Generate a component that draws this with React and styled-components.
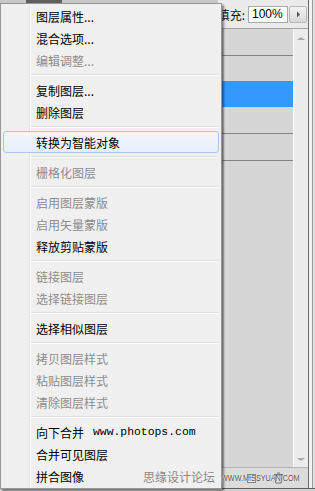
import React from "react";
import styled, { createGlobalStyle } from "styled-components";

const GlobalStyle = createGlobalStyle`
  html, body {
    margin: 0;
    padding: 0;
    background: #d2d2d2;
  }
  body {
    font-family: "Noto Sans CJK SC", "Liberation Sans", sans-serif;
  }
`;

const MENU_ITEMS = [
  { label: "图层属性..." },
  { label: "混合选项..." },
  { label: "编辑调整...", disabled: true },
  "sep",
  { label: "复制图层..." },
  { label: "删除图层" },
  "sep",
  { label: "转换为智能对象", hover: true },
  "sep",
  { label: "栅格化图层", disabled: true },
  "sep",
  { label: "启用图层蒙版", disabled: true },
  { label: "启用矢量蒙版", disabled: true },
  { label: "释放剪贴蒙版" },
  "sep",
  { label: "链接图层", disabled: true },
  { label: "选择链接图层", disabled: true },
  "sep",
  { label: "选择相似图层" },
  "sep",
  { label: "拷贝图层样式", disabled: true },
  { label: "粘贴图层样式", disabled: true },
  { label: "清除图层样式", disabled: true },
  "sep",
  { label: "向下合并", extra: "www.photops.com" },
  { label: "合并可见图层" },
  { label: "拼合图像" },
];

const LAYER_ROWS = [
  { h: 26, line: true },
  { h: 25 },
  { h: 26, selected: true },
  { h: 26, line: true },
  { h: 26, line: true },
];

const App = () => {
  return (
    <>
      <GlobalStyle />
      <Screen>
        <Panel>
          <Main>
            <FillRow>
              <HeaderTrack>
                <HeaderTab />
              </HeaderTrack>
              <FillLabel>填充:</FillLabel>
              <FillInput>100%</FillInput>
              <ArrowBtn>
                <svg width="5" height="7" viewBox="0 0 5 7">
                  <path d="M1 0.5 L4 3.5 L1 6.5 Z" fill="#555" />
                </svg>
              </ArrowBtn>
            </FillRow>
            <Body>
              <LayerList>
                {LAYER_ROWS.map((r, i) => (
                  <LayerRow key={i} $h={r.h} $line={r.line} $selected={r.selected} />
                ))}
              </LayerList>
              <ScrollBar>
                <ScrollArrow $dir="up" />
                <ScrollArrow $dir="down" />
              </ScrollBar>
            </Body>
            <Footer>
              <FooterIcon>
                <svg width="11" height="11" viewBox="0 0 11 11">
                  <rect x="1.5" y="1.5" width="8" height="8" fill="#f4f4f4" stroke="#6a6a6a" />
                  <path d="M1.5 4.5 H9.5" stroke="#6a6a6a" />
                </svg>
              </FooterIcon>
              <FooterIcon>
                <svg width="11" height="12" viewBox="0 0 11 12">
                  <path d="M2 3 H9 L8.2 11 H2.8 Z" fill="#e8e8e8" stroke="#555" />
                  <path d="M1 2.5 H10 M4 1 H7" stroke="#555" />
                </svg>
              </FooterIcon>
            </Footer>
          </Main>
          <FrameEdge />
        </Panel>

        <Menu>
          {MENU_ITEMS.map((item, i) =>
            item === "sep" ? (
              <Separator key={i} />
            ) : (
              <MenuItem key={i} $disabled={item.disabled} $hover={item.hover}>
                {item.label}
                {item.extra && <MonoText>{item.extra}</MonoText>}
              </MenuItem>
            )
          )}
        </Menu>

        <Watermark>
          <WatermarkCn>思缘设计论坛</WatermarkCn>
          <WatermarkEn>WWW.MISSYUAN.COM</WatermarkEn>
        </Watermark>
      </Screen>
    </>
  );
};

const Screen = styled.div`
  position: relative;
  width: 315px;
  height: 491px;
  overflow: hidden;
  background: #d2d2d2;
`;

const Panel = styled.div`
  display: flex;
  height: 488px;
  border-bottom: 1px solid #5c5c5c;
`;

const Main = styled.div`
  width: 308px;
  display: flex;
  flex-direction: column;
`;

const FrameEdge = styled.div`
  flex: 1;
  border-left: 1px solid #6a6a6a;
  background: linear-gradient(90deg, #f2f2f2 0, #f2f2f2 3px, #9a9a9a 3px, #9a9a9a 4px, #e2e2e2 4px);
`;

const FillRow = styled.div`
  height: 28px;
  display: flex;
  align-items: center;
  background: #eaeaea;
  border-bottom: 1px solid #a4a4a4;
`;

const HeaderTrack = styled.div`
  flex: 1;
  align-self: flex-start;
  display: flex;
  height: 3px;
  background: #c8c8c8;
`;

const HeaderTab = styled.div`
  width: 36px;
  margin-left: 26px;
  background: #5e5e5e;
`;

const FillLabel = styled.span`
  font-size: 12px;
  color: #111;
  margin-right: 3px;
  line-height: 17px;
  white-space: nowrap;
`;

const FillInput = styled.div`
  width: 40px;
  height: 17px;
  box-sizing: border-box;
  background: #fff;
  border: 1px solid #a9a9a9;
  font-family: "Liberation Sans", Arial, sans-serif;
  font-size: 12px;
  line-height: 15px;
  padding-left: 3px;
  color: #000;
`;

const ArrowBtn = styled.div`
  width: 18px;
  height: 17px;
  box-sizing: border-box;
  margin-left: 1px;
  margin-right: 1px;
  border: 1px solid #b8b8b8;
  border-radius: 2px;
  background: linear-gradient(#f4f4f4, #d8d8d8);
  display: flex;
  align-items: center;
  justify-content: center;
`;

const Body = styled.div`
  flex: 1;
  display: flex;
  min-height: 0;
`;

const LayerList = styled.div`
  flex: 1;
  background: linear-gradient(90deg, #7c7c7c 0, #bdbdbd 223px, #e2e2e2 224px, #d6d6d6 228px);
  display: flex;
  flex-direction: column;
`;

const LayerRow = styled.div`
  height: ${(p) => p.$h}px;
  border-bottom: ${(p) => (p.$line ? "1px solid #858585" : "none")};
  background: ${(p) => (p.$selected ? "#3399ff" : "transparent")};
`;

const ScrollBar = styled.div`
  width: 14px;
  border-left: 1px solid #fafafa;
  background: #ececec;
  display: flex;
  flex-direction: column;
  justify-content: space-between;
  align-items: center;
  padding: 8px 0 6px;
`;

const ScrollArrow = styled.div`
  width: 0;
  height: 0;
  border-left: 4px solid transparent;
  border-right: 4px solid transparent;
  ${(p) =>
    p.$dir === "up"
      ? "border-bottom: 3px solid #a8a8a8;"
      : "border-top: 3px solid #a8a8a8;"}
`;

const Footer = styled.div`
  height: 20px;
  border-top: 1px solid #b4b4b4;
  background: #dcdcdc;
  display: flex;
  align-items: center;
  justify-content: flex-end;
  gap: 16px;
  padding-right: 24px;
`;

const FooterIcon = styled.div`
  display: flex;
  opacity: 0.8;
`;

const Menu = styled.div`
  position: absolute;
  left: 0;
  top: 3px;
  width: 222px;
  box-sizing: border-box;
  padding: 1px 2px;
  border: 1px solid #979797;
  background-color: #f0f0f0;
  background-image: linear-gradient(
    90deg,
    transparent 0,
    transparent 28px,
    #e2e3e3 28px,
    #e2e3e3 29px,
    #ffffff 29px,
    #ffffff 30px,
    transparent 30px
  );
  box-shadow: 2px 2px 2px rgba(0, 0, 0, 0.45);
`;

const MenuItem = styled.div`
  height: 22px;
  box-sizing: border-box;
  padding-left: 32px;
  display: flex;
  align-items: center;
  font-size: 12px;
  white-space: nowrap;
  color: ${(p) => (p.$disabled ? "#8d8d8d" : "#000")};
  border: 1px solid ${(p) => (p.$hover ? "#aac7ec" : "transparent")};
  border-radius: 3px;
  background: ${(p) =>
    p.$hover ? "linear-gradient(#f3f7fd, #e5eefa)" : "transparent"};
`;

const MonoText = styled.span`
  font-family: "Liberation Mono", "Courier New", monospace;
  font-size: 11.4px;
  margin-left: 9px;
`;

const Separator = styled.div`
  height: 8px;
  margin-left: 28px;
  margin-right: 1px;
  display: flex;
  flex-direction: column;
  justify-content: center;
  &::before {
    content: "";
    height: 1px;
    background: #e0e0e0;
  }
  &::after {
    content: "";
    height: 1px;
    background: #ffffff;
  }
`;

const Watermark = styled.div`
  position: absolute;
  left: 143px;
  top: 468px;
  width: 172px;
  display: flex;
  align-items: center;
  gap: 6px;
  white-space: nowrap;
  pointer-events: none;
`;

const WatermarkCn = styled.span`
  flex-shrink: 0;
  font-size: 12px;
  color: #8a8a8a;
  line-height: 18px;
`;

const WatermarkEn = styled.span`
  flex-shrink: 0;
  display: inline-block;
  font-family: "Liberation Sans", Arial, sans-serif;
  font-size: 9.5px;
  color: #4a4a4a;
  transform: scaleX(0.76);
  transform-origin: left center;
  text-shadow: 0 0 1px #fff, 0 0 1px #fff;
`;

export default App;
